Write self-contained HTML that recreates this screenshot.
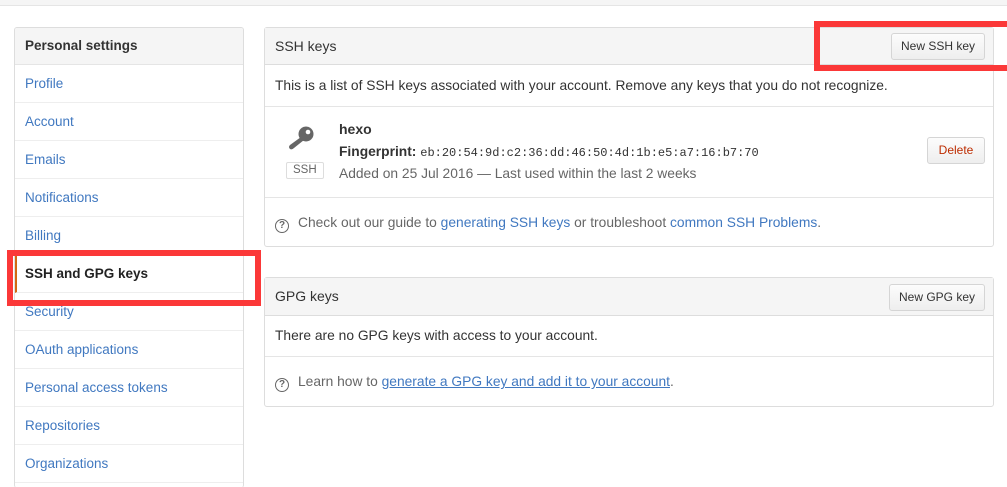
<!DOCTYPE html>
<html><head><style>
html,body{margin:0;width:1007px;height:487px;overflow:hidden}
body{background:#fff;font-family:"Liberation Sans",sans-serif;font-size:13.5px;color:#333;position:relative}
.top{position:absolute;left:0;top:0;width:1007px;height:5px;background:#f5f5f5;border-bottom:1px solid #e5e5e5}
.side{position:absolute;left:14px;top:27px;width:228px;height:460px;overflow:hidden;border:1px solid #ddd;border-radius:3px;border-bottom:none}
.side div{height:37px;line-height:37px;padding-left:10px;border-bottom:1px solid #eee;color:#4078c0}
.side .h{background:#f5f5f5;color:#333;font-weight:bold;border-bottom:1px solid #e5e5e5;height:36px;line-height:36px}
.side .a{color:#222;font-weight:bold;border-left:2px solid #d26911;padding-left:8px}
.p{position:absolute;left:264px;width:728px;border:1px solid #ddd;border-radius:3px}
.ph{background:#f5f5f5;height:36px;line-height:36px;padding-left:10px;border-bottom:1px solid #ddd;font-size:14px;color:#333;position:relative}
.row{padding-left:10px;border-bottom:1px solid #e5e5e5;position:relative;font-size:13.8px}
.btn{position:absolute;border:1px solid #d5d5d5;border-radius:3px;background:linear-gradient(#fcfcfc,#eee);font-size:12px;height:25px;line-height:25px;text-align:center;color:#333}
a{color:#4078c0;text-decoration:none}
.red{position:absolute;border:6px solid #fb3838}
.help{padding-left:10px;height:49px;line-height:49px;color:#666;font-size:13.8px}
.q{display:inline-block;width:12px;height:12px;border:1.5px solid #666;border-radius:50%;font-size:10px;line-height:12px;text-align:center;color:#666;font-weight:bold;vertical-align:-1px;margin-right:9px}
</style></head><body>
<div class="top"></div>
<div class="side">
<div class="h">Personal settings</div>
<div>Profile</div><div>Account</div><div>Emails</div><div>Notifications</div><div>Billing</div>
<div class="a">SSH and GPG keys</div>
<div>Security</div><div>OAuth applications</div><div>Personal access tokens</div><div>Repositories</div><div>Organizations</div>
</div>
<div class="p" style="top:27px;height:218px">
<div class="ph">SSH keys<div class="btn" style="right:8px;top:5px;width:92px">New SSH key</div></div>
<div class="row" style="height:41px;line-height:41px">This is a list of SSH keys associated with your account. Remove any keys that you do not recognize.</div>
<div class="row" style="height:90px">
<svg style="position:absolute;left:22px;top:19px" width="28" height="24" viewBox="0 0 28 24"><circle cx="19" cy="8" r="7.5" fill="#666"/><circle cx="21" cy="6" r="2.3" fill="#fff"/><path d="M14 11 L3 19 Q1 21 3 23 Q5 24 7 22 L17 14Z" fill="#666"/></svg>
<span style="position:absolute;left:21px;top:55px;border:1px solid #ddd;border-radius:2px;font-size:11.5px;color:#666;padding:1px 6px;line-height:13px">SSH</span>
<div style="position:absolute;left:74px;top:14px;font-weight:bold;font-size:14px">hexo</div>
<div style="position:absolute;left:74px;top:37px;font-size:13.8px"><b>Fingerprint:</b> <span style="font-family:'Liberation Mono',monospace;font-size:12px">eb:20:54:9d:c2:36:dd:46:50:4d:1b:e5:a7:16:b7:70</span></div>
<div style="position:absolute;left:74px;top:59px;color:#666">Added on 25 Jul 2016 — Last used within the last 2 weeks</div>
<div class="btn" style="right:8px;top:30px;width:56px;color:#bd2c00">Delete</div>
</div>
<div class="help"><span class="q">?</span>Check out our guide to <a>generating SSH keys</a> or troubleshoot <a>common SSH Problems</a>.</div>
</div>
<div class="p" style="top:277px;height:128px">
<div class="ph" style="height:37px;line-height:37px">GPG keys<div class="btn" style="right:8px;top:6px;width:94px">New GPG key</div></div>
<div class="row" style="height:40px;line-height:40px">There are no GPG keys with access to your account.</div>
<div class="help"><span class="q">?</span>Learn how to <a style="text-decoration:underline">generate a GPG key and add it to your account</a>.</div>
</div>
<div class="red" style="left:7px;top:250px;width:242px;height:44px"></div>
<div class="red" style="left:814px;top:21px;width:200px;height:38px"></div>
</body></html>
